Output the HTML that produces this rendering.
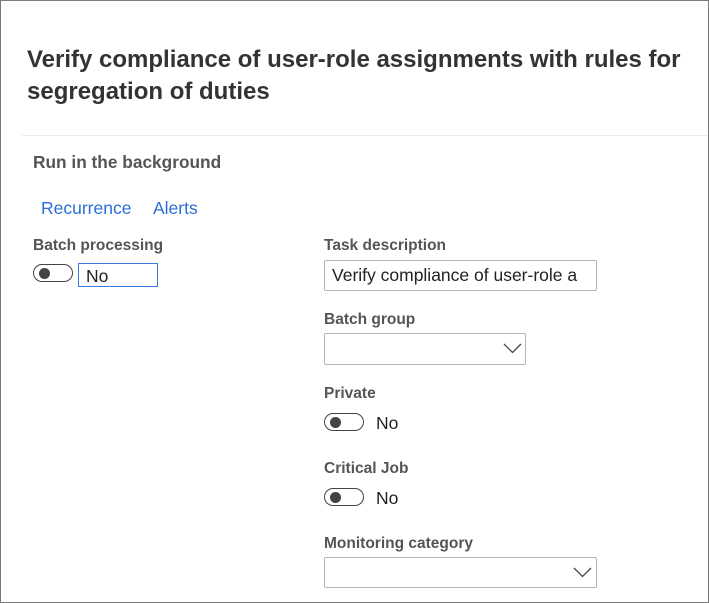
<!DOCTYPE html>
<html><head><style>
body{margin:0;width:709px;height:603px;overflow:hidden;background:#fff;font-family:"Liberation Sans",sans-serif;}
.frame{position:absolute;left:0;top:0;width:707px;height:601px;border:1px solid #7a7a7a;}
.a{position:absolute;white-space:nowrap;}
.title{left:27px;top:44px;font-size:24px;font-weight:bold;color:#333;line-height:32px;}
.lbl{font-size:15.5px;font-weight:bold;color:#555;}
.link{font-size:17.5px;color:#2a6fd6;}
.tog{position:absolute;width:40px;height:18px;border:1.5px solid #444;border-radius:11px;box-sizing:border-box;}
.tog:after{content:"";position:absolute;left:5px;top:2.5px;width:11px;height:11px;border-radius:50%;background:#444;}
.box{position:absolute;border:1px solid #b5b5b5;box-sizing:border-box;background:#fff;border-radius:2px;}
.no{font-size:17.5px;color:#222;}
</style></head><body>
<div class="frame"></div>
<div class="a title">Verify compliance of user-role assignments with rules for<br>segregation of duties</div>
<div class="a" style="left:22px;top:135px;width:686px;height:1px;background:#ececec"></div>
<div class="a lbl" style="left:33px;top:152px;font-size:17.3px">Run in the background</div>
<div class="a link" style="left:41px;top:198px">Recurrence</div>
<div class="a link" style="left:153px;top:198px">Alerts</div>
<div class="a lbl" style="left:33px;top:237px">Batch processing</div>
<div class="tog" style="left:33px;top:264px"></div>
<div class="a" style="left:78px;top:263px;width:80px;height:24px;border:1.5px solid #3b7be0;box-sizing:border-box"></div>
<div class="a no" style="left:86px;top:266px">No</div>
<div class="a lbl" style="left:324px;top:237px">Task description</div>
<div class="box" style="left:324px;top:260px;width:273px;height:31px"></div>
<div class="a" style="left:332px;top:265px;font-size:17.5px;color:#222;width:262px;overflow:hidden">Verify compliance of user-role a</div>
<div class="a lbl" style="left:324px;top:311px">Batch group</div>
<div class="box" style="left:324px;top:333px;width:202px;height:32px"></div>
<svg class="a" style="left:503px;top:343px" width="19" height="11"><path d="M1 1 L9.5 9.5 L18 1" fill="none" stroke="#444" stroke-width="1.3"/></svg>
<div class="a lbl" style="left:324px;top:385px">Private</div>
<div class="tog" style="left:324px;top:413px"></div>
<div class="a no" style="left:376px;top:413px">No</div>
<div class="a lbl" style="left:324px;top:460px">Critical Job</div>
<div class="tog" style="left:324px;top:488px"></div>
<div class="a no" style="left:376px;top:488px">No</div>
<div class="a lbl" style="left:324px;top:535px">Monitoring category</div>
<div class="box" style="left:324px;top:557px;width:273px;height:31px"></div>
<svg class="a" style="left:573px;top:567px" width="19" height="11"><path d="M1 1 L9.5 9.5 L18 1" fill="none" stroke="#444" stroke-width="1.3"/></svg>
</body></html>
